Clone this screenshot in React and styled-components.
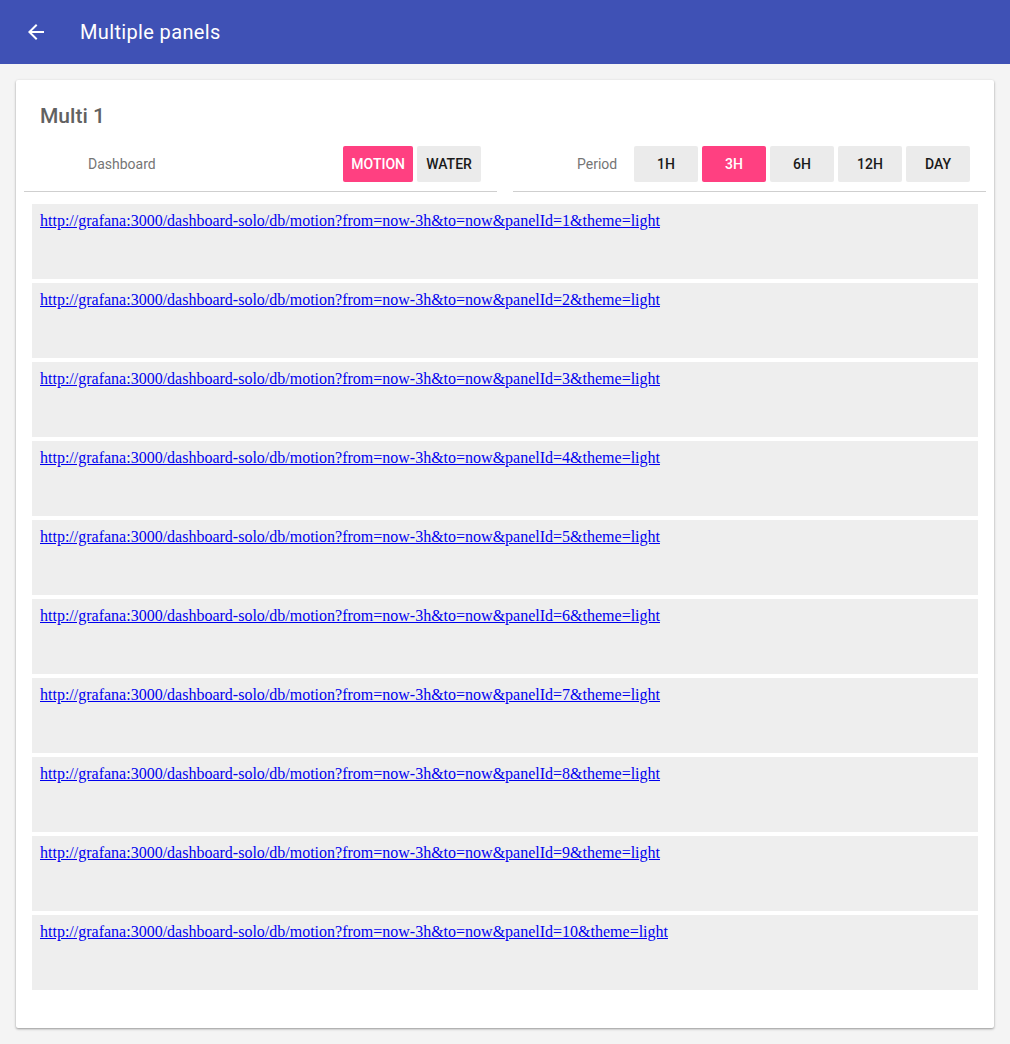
import React from 'react';
import styled, { createGlobalStyle } from 'styled-components';

const GlobalStyle = createGlobalStyle`
  body {
    margin: 0;
    background: #f4f4f4;
    font-family: Roboto, "Liberation Sans", sans-serif;
  }
`;

const AppBar = styled.header`
  display: flex;
  align-items: center;
  height: 64px;
  padding: 0 24px;
  background: #3f51b5;
  color: #fff;
  box-sizing: border-box;
`;

const BackButton = styled.button`
  display: flex;
  align-items: center;
  justify-content: center;
  width: 24px;
  height: 24px;
  padding: 0;
  margin-right: 32px;
  border: none;
  background: none;
  color: #fff;
  cursor: pointer;
`;

const AppTitle = styled.h1`
  margin: 0;
  font-size: 20px;
  font-weight: 400;
  letter-spacing: 0.35px;
`;

const Page = styled.main`
  padding: 16px;
`;

const Card = styled.section`
  background: #fff;
  padding: 22px 0 38px;
  box-shadow: 0 1px 3px rgba(0, 0, 0, 0.22), 0 1px 2px rgba(0, 0, 0, 0.2);
  border-radius: 2px;
`;

const CardTitle = styled.h2`
  margin: 0 24px;
  font-size: 21px;
  line-height: 28px;
  font-weight: 500;
  color: #616161;
`;

const Toolbar = styled.div`
  display: grid;
  grid-template-columns: 1fr 1fr;
  column-gap: 16px;
  padding: 16px 8px 0;
`;

const Selector = styled.div`
  display: flex;
  align-items: center;
  justify-content: space-between;
  padding: 0 16px 9px 64px;
  border-bottom: 1px solid #cfcfcf;
`;

const Label = styled.span`
  font-size: 14px;
  color: #757575;
`;

const ButtonGroup = styled.div`
  display: flex;
  gap: 4px;
`;

const Choice = styled.button`
  min-width: 64px;
  height: 36px;
  padding: 0 8px;
  border: none;
  border-radius: 2px;
  background: ${({ $active }) => ($active ? '#ff4081' : '#ebebeb')};
  color: ${({ $active }) => ($active ? '#fff' : '#1a1a1a')};
  font-family: Roboto, "Liberation Sans", sans-serif;
  font-size: 14px;
  font-weight: 500;
  text-transform: uppercase;
  cursor: pointer;
`;

const Panels = styled.div`
  display: flex;
  flex-direction: column;
  gap: 4px;
  padding: 12px 16px 0;
`;

const Panel = styled.div`
  height: 75px;
  padding: 8px;
  box-sizing: border-box;
  background: #eeeeee;
  font-family: "Liberation Serif", serif;
  font-size: 16px;
`;

const PanelLink = styled.a`
  color: #0000ee;
  text-decoration: underline;
`;

const dashboards = ['motion', 'water'];
const periods = ['1h', '3h', '6h', '12h', 'day'];

const panelUrl = (id) =>
  `http://grafana:3000/dashboard-solo/db/motion?from=now-3h&to=now&panelId=${id}&theme=light`;

const ArrowBack = () => (
  <svg width="24" height="24" viewBox="0 0 24 24" fill="currentColor">
    <path d="M20 11H7.83l5.59-5.59L12 4l-8 8 8 8 1.41-1.41L7.83 13H20v-2z" />
  </svg>
);

const App = () => (
  <>
    <GlobalStyle />
    <AppBar>
      <BackButton aria-label="Back">
        <ArrowBack />
      </BackButton>
      <AppTitle>Multiple panels</AppTitle>
    </AppBar>
    <Page>
      <Card>
        <CardTitle>Multi 1</CardTitle>
        <Toolbar>
          <Selector>
            <Label>Dashboard</Label>
            <ButtonGroup>
              {dashboards.map((d) => (
                <Choice key={d} $active={d === 'motion'}>
                  {d}
                </Choice>
              ))}
            </ButtonGroup>
          </Selector>
          <Selector>
            <Label>Period</Label>
            <ButtonGroup>
              {periods.map((p) => (
                <Choice key={p} $active={p === '3h'}>
                  {p}
                </Choice>
              ))}
            </ButtonGroup>
          </Selector>
        </Toolbar>
        <Panels>
          {Array.from({ length: 10 }, (_, i) => (
            <Panel key={i}>
              <PanelLink href={panelUrl(i + 1)}>{panelUrl(i + 1)}</PanelLink>
            </Panel>
          ))}
        </Panels>
      </Card>
    </Page>
  </>
);

export default App;
